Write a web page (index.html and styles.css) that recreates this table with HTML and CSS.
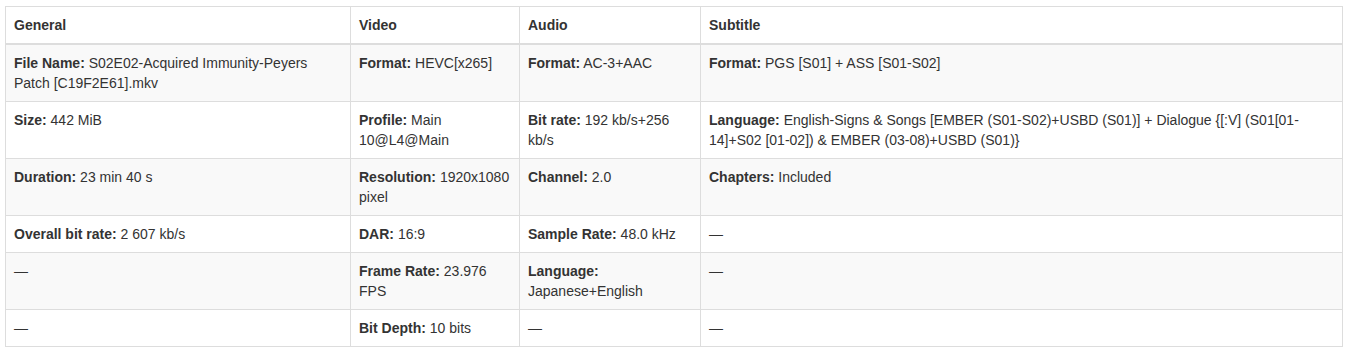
FILE: index.html
```html
<!DOCTYPE html>
<html>
<head>
<meta charset="utf-8">
<link rel="stylesheet" href="styles.css">
</head>
<body>
<div class="wrap">
<table class="info">
<colgroup>
<col class="c-gen"><col class="c-vid"><col class="c-aud"><col class="c-sub">
</colgroup>
<thead>
<tr><th>General</th><th>Video</th><th>Audio</th><th>Subtitle</th></tr>
</thead>
<tbody>
<tr>
<td><b>File Name:</b> S02E02-Acquired Immunity-Peyers Patch [C19F2E61].mkv</td>
<td><b>Format:</b> HEVC[x265]</td>
<td><b>Format:</b> AC-3+AAC</td>
<td><b>Format:</b> PGS [S01] + ASS [S01-S02]</td>
</tr>
<tr>
<td><b>Size:</b> 442 MiB</td>
<td><b>Profile:</b> Main 10@L4@Main</td>
<td><b>Bit rate:</b> 192 kb/s+256 kb/s</td>
<td><b>Language:</b> English-Signs &amp; Songs [EMBER (S01-S02)+USBD (S01)] + Dialogue {[:V] (S01[01-14]+S02 [01-02]) &amp; EMBER (03-08)+USBD (S01)}</td>
</tr>
<tr>
<td><b>Duration:</b> 23 min 40 s</td>
<td><b>Resolution:</b> 1920x1080 pixel</td>
<td><b>Channel:</b> 2.0</td>
<td><b>Chapters:</b> Included</td>
</tr>
<tr>
<td><b>Overall bit rate:</b> 2 607 kb/s</td>
<td><b>DAR:</b> 16:9</td>
<td><b>Sample Rate:</b> 48.0 kHz</td>
<td>—</td>
</tr>
<tr>
<td>—</td>
<td><b>Frame Rate:</b> 23.976 FPS</td>
<td><b>Language:</b> Japanese+English</td>
<td>—</td>
</tr>
<tr>
<td>—</td>
<td><b>Bit Depth:</b> 10 bits</td>
<td>—</td>
<td>—</td>
</tr>
</tbody>
</table>
</div>
</body>
</html>
```
FILE: styles.css
```css
html, body {
  margin: 0;
  padding: 0;
  background: #fff;
}
.wrap {
  padding: 6px 0 0 5px;
}
.info {
  width: 1337px;
  table-layout: fixed;
  border-collapse: collapse;
  border-spacing: 0;
  font-family: "Liberation Sans", Arial, sans-serif;
  font-size: 14px;
  line-height: 20px;
  color: #333;
  border: 1px solid #ddd;
}
.c-gen { width: 345px; }
.c-vid { width: 169px; }
.c-aud { width: 181px; }
.c-sub { width: 642px; }
.info th, .info td {
  border: 1px solid #ddd;
  padding: 8px;
  text-align: left;
  vertical-align: top;
}
.info th {
  font-weight: bold;
  border-bottom: 2px solid #ddd;
  vertical-align: bottom;
}
.info b { font-weight: bold; }
.info tbody tr:nth-child(odd) { background: #f9f9f9; }
```
